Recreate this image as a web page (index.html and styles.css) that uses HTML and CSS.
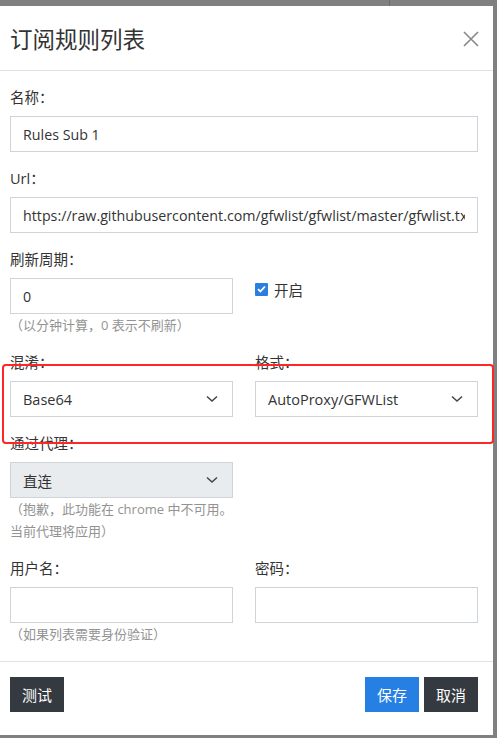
FILE: index.html
```html
<!DOCTYPE html>
<html lang="zh-CN">
<head>
<meta charset="utf-8">
<title>订阅规则列表</title>
<link rel="stylesheet" href="styles.css">
</head>
<body>
<div class="backdrop-lines top-line"></div>
<div class="modal">
  <div class="modal-header">
    <h1 class="modal-title">订阅规则列表</h1>
    <span class="close-btn" aria-label="close">
      <svg width="16" height="16" viewBox="0 0 16 16"><path d="M1 1 L15 15 M15 1 L1 15" stroke="#888" stroke-width="1.6" fill="none"/></svg>
    </span>
  </div>
  <div class="modal-body">
    <div class="group">
      <label class="label">名称：</label>
      <input class="control" type="text" value="Rules Sub 1">
    </div>
    <div class="group">
      <label class="label">Url：</label>
      <input class="control" type="text" value="https://raw.githubusercontent.com/gfwlist/gfwlist/master/gfwlist.txt">
    </div>
    <div class="group">
      <label class="label">刷新周期：</label>
      <div class="row">
        <div>
          <input class="control" type="text" value="0">
          <div class="help">（以分钟计算，0 表示不刷新）</div>
        </div>
        <div class="check-wrap">
          <span class="checkbox">
            <svg width="9" height="8" viewBox="0 0 9 8"><path d="M1 4.2 L3.4 6.4 L8 1.5" stroke="#fff" stroke-width="1.8" fill="none"/></svg>
          </span>
          <span class="check-label">开启</span>
        </div>
      </div>
    </div>
    <div class="group row">
      <div>
        <label class="label">混淆：</label>
        <div class="select"><span>Base64</span><svg class="chev" width="12" height="8" viewBox="0 0 12 8"><path d="M1 1.5 L6 6 L11 1.5" stroke="#444" stroke-width="1.5" fill="none"/></svg></div>
      </div>
      <div>
        <label class="label">格式：</label>
        <div class="select"><span>AutoProxy/GFWList</span><svg class="chev" width="12" height="8" viewBox="0 0 12 8"><path d="M1 1.5 L6 6 L11 1.5" stroke="#444" stroke-width="1.5" fill="none"/></svg></div>
      </div>
    </div>
    <div class="group row">
      <div>
        <label class="label">通过代理：</label>
        <div class="select disabled"><span>直连</span><svg class="chev" width="12" height="8" viewBox="0 0 12 8"><path d="M1 1.5 L6 6 L11 1.5" stroke="#444" stroke-width="1.5" fill="none"/></svg></div>
        <div class="help">（抱歉，此功能在 chrome 中不可用。当前代理将应用）</div>
      </div>
      <div></div>
    </div>
    <div class="group row last">
      <div>
        <label class="label">用户名：</label>
        <input class="control" type="text" value="">
        <div class="help">（如果列表需要身份验证）</div>
      </div>
      <div>
        <label class="label">密码：</label>
        <input class="control" type="password" value="">
      </div>
    </div>
  </div>
  <div class="modal-footer">
    <button class="btn btn-dark">测试</button>
    <div class="spacer"></div>
    <button class="btn btn-primary">保存</button>
    <button class="btn btn-dark">取消</button>
  </div>
</div>
<div class="highlight"></div>
</body>
</html>
```
FILE: styles.css
```css
* { box-sizing: border-box; }
html, body { margin: 0; padding: 0; }
body {
  background: #808080;
  width: 497px;
  height: 738px;
  overflow: hidden;
  font-family: "Open Sans", "Noto Sans CJK SC", sans-serif;
  color: #333;
  position: relative;
}
.top-line {
  position: absolute;
  left: 389px;
  top: 0;
  width: 1px;
  height: 6px;
  background: #6a6a6a;
}
.modal {
  margin-top: 6px;
  width: 493px;
  height: 729px;
  background: #fff;
  display: flex;
  flex-direction: column;
}
.modal-header {
  height: 65px;
  border-bottom: 1px solid #dee2e6;
  display: flex;
  align-items: center;
  justify-content: space-between;
  padding: 0 14px 0 10px;
}
.modal-title {
  margin: 0;
  font-size: 22.5px;
  font-weight: 400;
  color: #333;
  font-family: "Noto Sans CJK SC", sans-serif;
  line-height: 1;
  margin-top: 1px;
}
.close-btn { display: flex; margin-top: 1px; }
.modal-body {
  padding: 16px 15px 0 10px;
}
.group { margin-bottom: 16px; }
.group.last { margin-bottom: 16px; }
.label {
  display: block;
  font-size: 14.5px;
  line-height: 21px;
  height: 21px;
  margin-bottom: 8px;
  font-family: "Open Sans", "Noto Sans CJK SC", sans-serif;
  color: #333;
}
.control {
  display: block;
  width: 100%;
  height: 36px;
  border: 1px solid #ced4da;
  border-radius: 0;
  padding: 0 12px;
  font-family: "Open Sans", "Noto Sans CJK SC", sans-serif;
  font-size: 14.25px;
  color: #333;
  background: #fff;
  outline: none;
}
.row {
  display: grid;
  grid-template-columns: 1fr 1fr;
  column-gap: 22px;
}
.help {
  font-size: 13px;
  line-height: 22px;
  color: #939393;
  font-family: "Open Sans", "Noto Sans CJK SC", sans-serif;
}
.check-wrap {
  display: flex;
  align-items: center;
  height: 22px;
}
.checkbox {
  width: 13px;
  height: 13px;
  background: #2a7ee2;
  border-radius: 1px;
  display: flex;
  align-items: center;
  justify-content: center;
  margin-right: 6px;
}
.check-label {
  font-size: 14.5px;
  font-family: "Noto Sans CJK SC", sans-serif;
  color: #333;
}
.select {
  height: 36px;
  border: 1px solid #ced4da;
  display: flex;
  align-items: center;
  justify-content: space-between;
  padding: 0 14px 0 12px;
  font-size: 14.5px;
  background: #fff;
}
.select.disabled { background: #e9ecef; }
.chev { display: block; }
.modal-footer {
  border-top: 1px solid #dee2e6;
  display: flex;
  align-items: flex-start;
  padding: 15px 15px 0 10px;
  gap: 5px;
  flex: 1;
}
.spacer { flex: 1; }
.btn {
  height: 35px;
  border: none;
  border-radius: 0;
  padding: 0 12px;
  font-size: 15px;
  font-family: "Noto Sans CJK SC", sans-serif;
  color: #fff;
  cursor: pointer;
  white-space: nowrap;
  display: flex;
  align-items: center;
  justify-content: center;
}
.btn-dark { background: #343a40; }
.btn-primary { background: #2680e3; }
.highlight {
  position: absolute;
  left: 2px;
  top: 364px;
  width: 492px;
  height: 80px;
  border: 2px solid #ff2626;
  border-radius: 4px;
  pointer-events: none;
}
```
